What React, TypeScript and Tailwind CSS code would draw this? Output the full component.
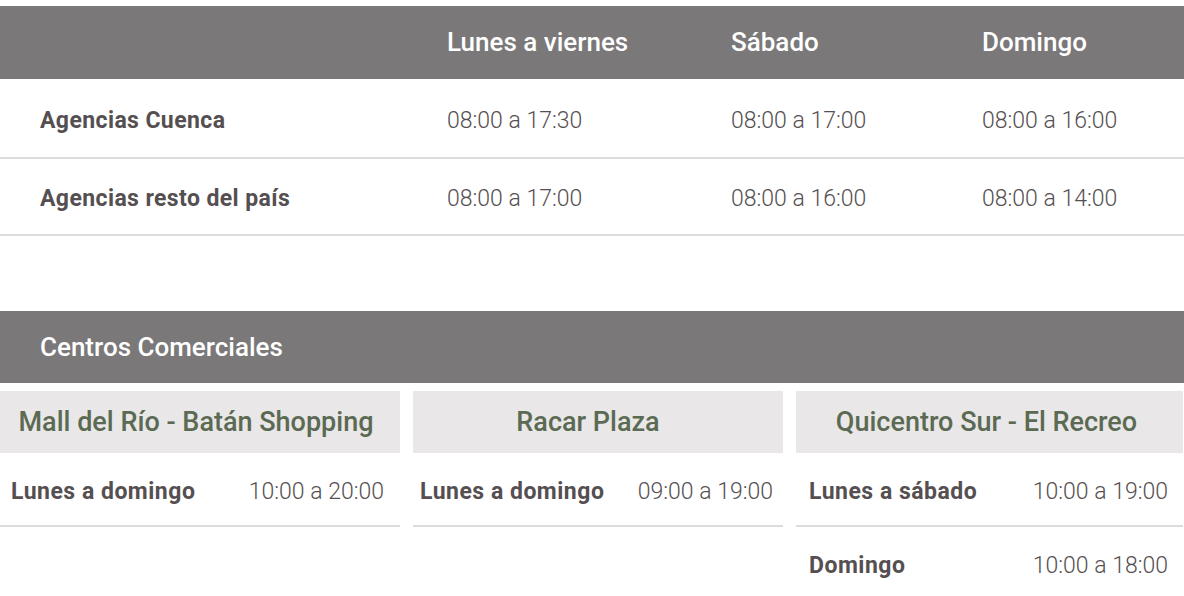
import React from "react";

const font = { fontFamily: "Roboto, 'Noto Sans', sans-serif" };

const topRows = [
  { name: "Agencias Cuenca", a: "08:00 a 17:30", b: "08:00 a 17:00", c: "08:00 a 16:00", h: "h-[80px]" },
  { name: "Agencias resto del país", a: "08:00 a 17:00", b: "08:00 a 16:00", c: "08:00 a 14:00", h: "h-[77px]" },
];

function Row({ label, time, pad }: { label: string; time: string; pad: string }) {
  return (
    <div className={`flex items-center justify-between border-b-2 border-[#dcdcdc] pt-[6px] ${pad}`}>
      <span className="font-bold text-[23px] tracking-[0.5px] text-[#554f51]">{label}</span>
      <span className="font-light text-[23px] text-[#554f51]">{time}</span>
    </div>
  );
}

export default function App() {
  return (
    <div className="w-[1184px] h-[596px] overflow-hidden bg-white pt-[6px]" style={font}>
      {/* Top table */}
      <div className="grid grid-cols-[407px_284px_251px_1fr] h-[73px] items-center bg-[#7a7879] text-white text-[26px] font-medium">
        <div />
        <div className="pl-[40px]">Lunes a viernes</div>
        <div className="pl-[40px]">Sábado</div>
        <div className="pl-[40px]">Domingo</div>
      </div>
      {topRows.map((r) => (
        <div
          key={r.name}
          className={`grid grid-cols-[407px_284px_251px_1fr] ${r.h} items-center border-b-2 border-[#dcdcdc] pt-[6px] text-[23px] text-[#554f51]`}
        >
          <div className="pl-[40px] font-bold tracking-[0.4px]">{r.name}</div>
          <div className="pl-[40px] font-light">{r.a}</div>
          <div className="pl-[40px] font-light">{r.b}</div>
          <div className="pl-[40px] font-light">{r.c}</div>
        </div>
      ))}

      {/* Centros comerciales */}
      <div className="mt-[75px] h-[72px] flex items-center bg-[#7a7879] pl-[40px] text-white text-[26px] font-medium">
        Centros Comerciales
      </div>
      <div className="mt-[8px] grid grid-cols-[400px_370px_387px] gap-x-[13px]">
        <div className="flex flex-col">
          <div className="h-[62px] flex items-center justify-center bg-[#e9e7e8] pr-[8px] text-[#5b6a53] text-[27px] font-medium">
            Mall del Río - Batán Shopping
          </div>
          <Row label="Lunes a domingo" time="10:00 a 20:00" pad="h-[74px] pl-[11px] pr-[16px]" />
        </div>
        <div className="flex flex-col">
          <div className="h-[62px] flex items-center justify-center bg-[#e9e7e8] pr-[20px] text-[#5b6a53] text-[27px] font-medium">
            Racar Plaza
          </div>
          <Row label="Lunes a domingo" time="09:00 a 19:00" pad="h-[74px] pl-[7px] pr-[10px]" />
        </div>
        <div className="flex flex-col">
          <div className="h-[62px] flex items-center justify-center bg-[#e9e7e8] pr-[6px] text-[#5b6a53] text-[27px] font-medium">
            Quicentro Sur - El Recreo
          </div>
          <Row label="Lunes a sábado" time="10:00 a 19:00" pad="h-[74px] pl-[13px] pr-[15px]" />
          <Row label="Domingo" time="10:00 a 18:00" pad="h-[74px] pl-[13px] pr-[15px]" />
        </div>
      </div>
    </div>
  );
}
